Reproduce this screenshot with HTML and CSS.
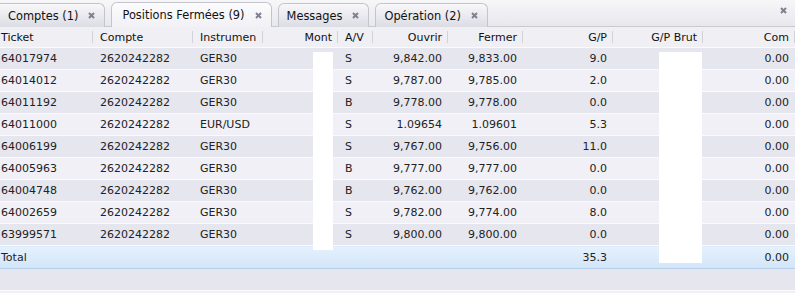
FILE: index.html
```html
<!DOCTYPE html>
<html lang="fr">
<head>
    <meta charset="UTF-8">
    <title>Positions Fermées</title>
    <link rel="stylesheet" href="styles.css">
</head>
<body>
    <div class="tabbar">
        <div class="tab">Comptes (1) <span class="x"><svg width="7" height="7" viewBox="0 0 7 7"><path d="M1 1L6 6M6 1L1 6"/></svg></span></div>
        <div class="tab active">Positions Fermées (9) <span class="x"><svg width="7" height="7" viewBox="0 0 7 7"><path d="M1 1L6 6M6 1L1 6"/></svg></span></div>
        <div class="tab">Messages <span class="x"><svg width="7" height="7" viewBox="0 0 7 7"><path d="M1 1L6 6M6 1L1 6"/></svg></span></div>
        <div class="tab">Opération (2) <span class="x"><svg width="7" height="7" viewBox="0 0 7 7"><path d="M1 1L6 6M6 1L1 6"/></svg></span></div>
        <span class="close"><svg width="7" height="7" viewBox="0 0 7 7"><path d="M1 1L6 6M6 1L1 6"/></svg></span>
    </div>

    <div class="grid">
        <table>
            <colgroup>
                <col style="width:93px">
                <col style="width:100px">
                <col style="width:70px">
                <col style="width:75px">
                <col style="width:35px">
                <col style="width:75px">
                <col style="width:75px">
                <col style="width:90px">
                <col style="width:90px">
                <col>
            </colgroup>
            <thead>
                <tr>
                    <th>Ticket</th>
                    <th>Compte</th>
                    <th>Instrumen</th>
                    <th class="r">Mont</th>
                    <th>A/V</th>
                    <th class="r">Ouvrir</th>
                    <th class="r">Fermer</th>
                    <th class="r">G/P</th>
                    <th class="r">G/P Brut</th>
                    <th class="r">Com</th>
                </tr>
            </thead>
            <tbody>
                <tr><td>64017974</td><td>2620242282</td><td>GER30</td><td></td><td>S</td><td class="r">9,842.00</td><td class="r">9,833.00</td><td class="r">9.0</td><td></td><td class="r">0.00</td></tr>
                <tr><td>64014012</td><td>2620242282</td><td>GER30</td><td></td><td>S</td><td class="r">9,787.00</td><td class="r">9,785.00</td><td class="r">2.0</td><td></td><td class="r">0.00</td></tr>
                <tr><td>64011192</td><td>2620242282</td><td>GER30</td><td></td><td>B</td><td class="r">9,778.00</td><td class="r">9,778.00</td><td class="r">0.0</td><td></td><td class="r">0.00</td></tr>
                <tr><td>64011000</td><td>2620242282</td><td>EUR/USD</td><td></td><td>S</td><td class="r">1.09654</td><td class="r">1.09601</td><td class="r">5.3</td><td></td><td class="r">0.00</td></tr>
                <tr><td>64006199</td><td>2620242282</td><td>GER30</td><td></td><td>S</td><td class="r">9,767.00</td><td class="r">9,756.00</td><td class="r">11.0</td><td></td><td class="r">0.00</td></tr>
                <tr><td>64005963</td><td>2620242282</td><td>GER30</td><td></td><td>B</td><td class="r">9,777.00</td><td class="r">9,777.00</td><td class="r">0.0</td><td></td><td class="r">0.00</td></tr>
                <tr><td>64004748</td><td>2620242282</td><td>GER30</td><td></td><td>B</td><td class="r">9,762.00</td><td class="r">9,762.00</td><td class="r">0.0</td><td></td><td class="r">0.00</td></tr>
                <tr><td>64002659</td><td>2620242282</td><td>GER30</td><td></td><td>S</td><td class="r">9,782.00</td><td class="r">9,774.00</td><td class="r">8.0</td><td></td><td class="r">0.00</td></tr>
                <tr><td>63999571</td><td>2620242282</td><td>GER30</td><td></td><td>S</td><td class="r">9,800.00</td><td class="r">9,800.00</td><td class="r">0.0</td><td></td><td class="r">0.00</td></tr>
                <tr class="total"><td>Total</td><td></td><td></td><td></td><td></td><td></td><td></td><td class="r">35.3</td><td></td><td class="r">0.00</td></tr>
                <tr class="empty"><td colspan="10"></td></tr>
            </tbody>
        </table>
        <div class="mask mask-mont"></div>
        <div class="mask mask-brut"></div>
    </div>
</body>
</html>
```

FILE: styles.css
```css
body {
    margin: 0;
    font-family: "DejaVu Sans", Verdana, sans-serif;
    font-size: 11px;
    color: #222;
    background: #f0f0f6;
    overflow: hidden;
}

.tabbar {
    display: flex;
    align-items: flex-end;
    gap: 6px;
    height: 26px;
    background: linear-gradient(#f7f7f9, #e7e7ed);
    border-bottom: 1px solid #c9c9d3;
}
.tab {
    display: flex;
    align-items: center;
    gap: 10px;
    height: 23px;
    padding: 0 9px 0 8px;
    margin-bottom: -1px;
    background: linear-gradient(#f8f8fa, #dcdce5);
    border: 1px solid #c4c4cf;
    border-bottom: none;
    border-radius: 6px 6px 0 0;
    font-size: 11.4px;
    color: #111;
    white-space: nowrap;
}
.tab:first-child {
    border-left: none;
    border-top-left-radius: 0;
}
.tab.active {
    height: 24px;
    padding-left: 10px;
    background: linear-gradient(#fcfcfd, #f1f1f6);
}
.x, .close {
    display: flex;
}
.x svg path, .close svg path {
    stroke: #7f7f90;
    stroke-width: 2;
    fill: none;
}
.close {
    margin-left: auto;
    align-self: flex-start;
    margin-top: 7px;
    margin-right: 8px;
}

.grid {
    position: relative;
}
table {
    width: 100%;
    border-collapse: collapse;
    table-layout: fixed;
}
th, td {
    height: 21px;
    padding: 0 6px 0 7px;
    text-align: left;
    white-space: nowrap;
    overflow: hidden;
    font-weight: normal;
    border-bottom: 1px solid #fbfbfd;
}
th:first-child, td:first-child {
    padding-left: 1px;
}
th {
    height: 20px;
    background: #efeff4 linear-gradient(#d2d2da, #d2d2da) right center / 1px 12px no-repeat;
    color: #111;
}
th.r, td.r {
    text-align: right;
}
tbody tr:nth-child(odd) td {
    background: #e6e6ef;
}
tbody tr:nth-child(even) td {
    background: #f0f0f6;
}
tbody tr.total td {
    height: 21px;
    padding-top: 1px;
    background: linear-gradient(#e5f1fc, #d2e5f8);
    border-bottom: 1px solid #b6cfe8;
}
tbody tr.empty td {
    background: #e6e6ef;
    border-top: 1px solid #fbfbfd;
}

.mask {
    position: absolute;
    background: #fff;
}
.mask-mont {
    left: 313px;
    top: 25px;
    width: 20px;
    height: 198px;
}
.mask-brut {
    left: 659px;
    top: 25px;
    width: 43px;
    height: 211px;
}
```
